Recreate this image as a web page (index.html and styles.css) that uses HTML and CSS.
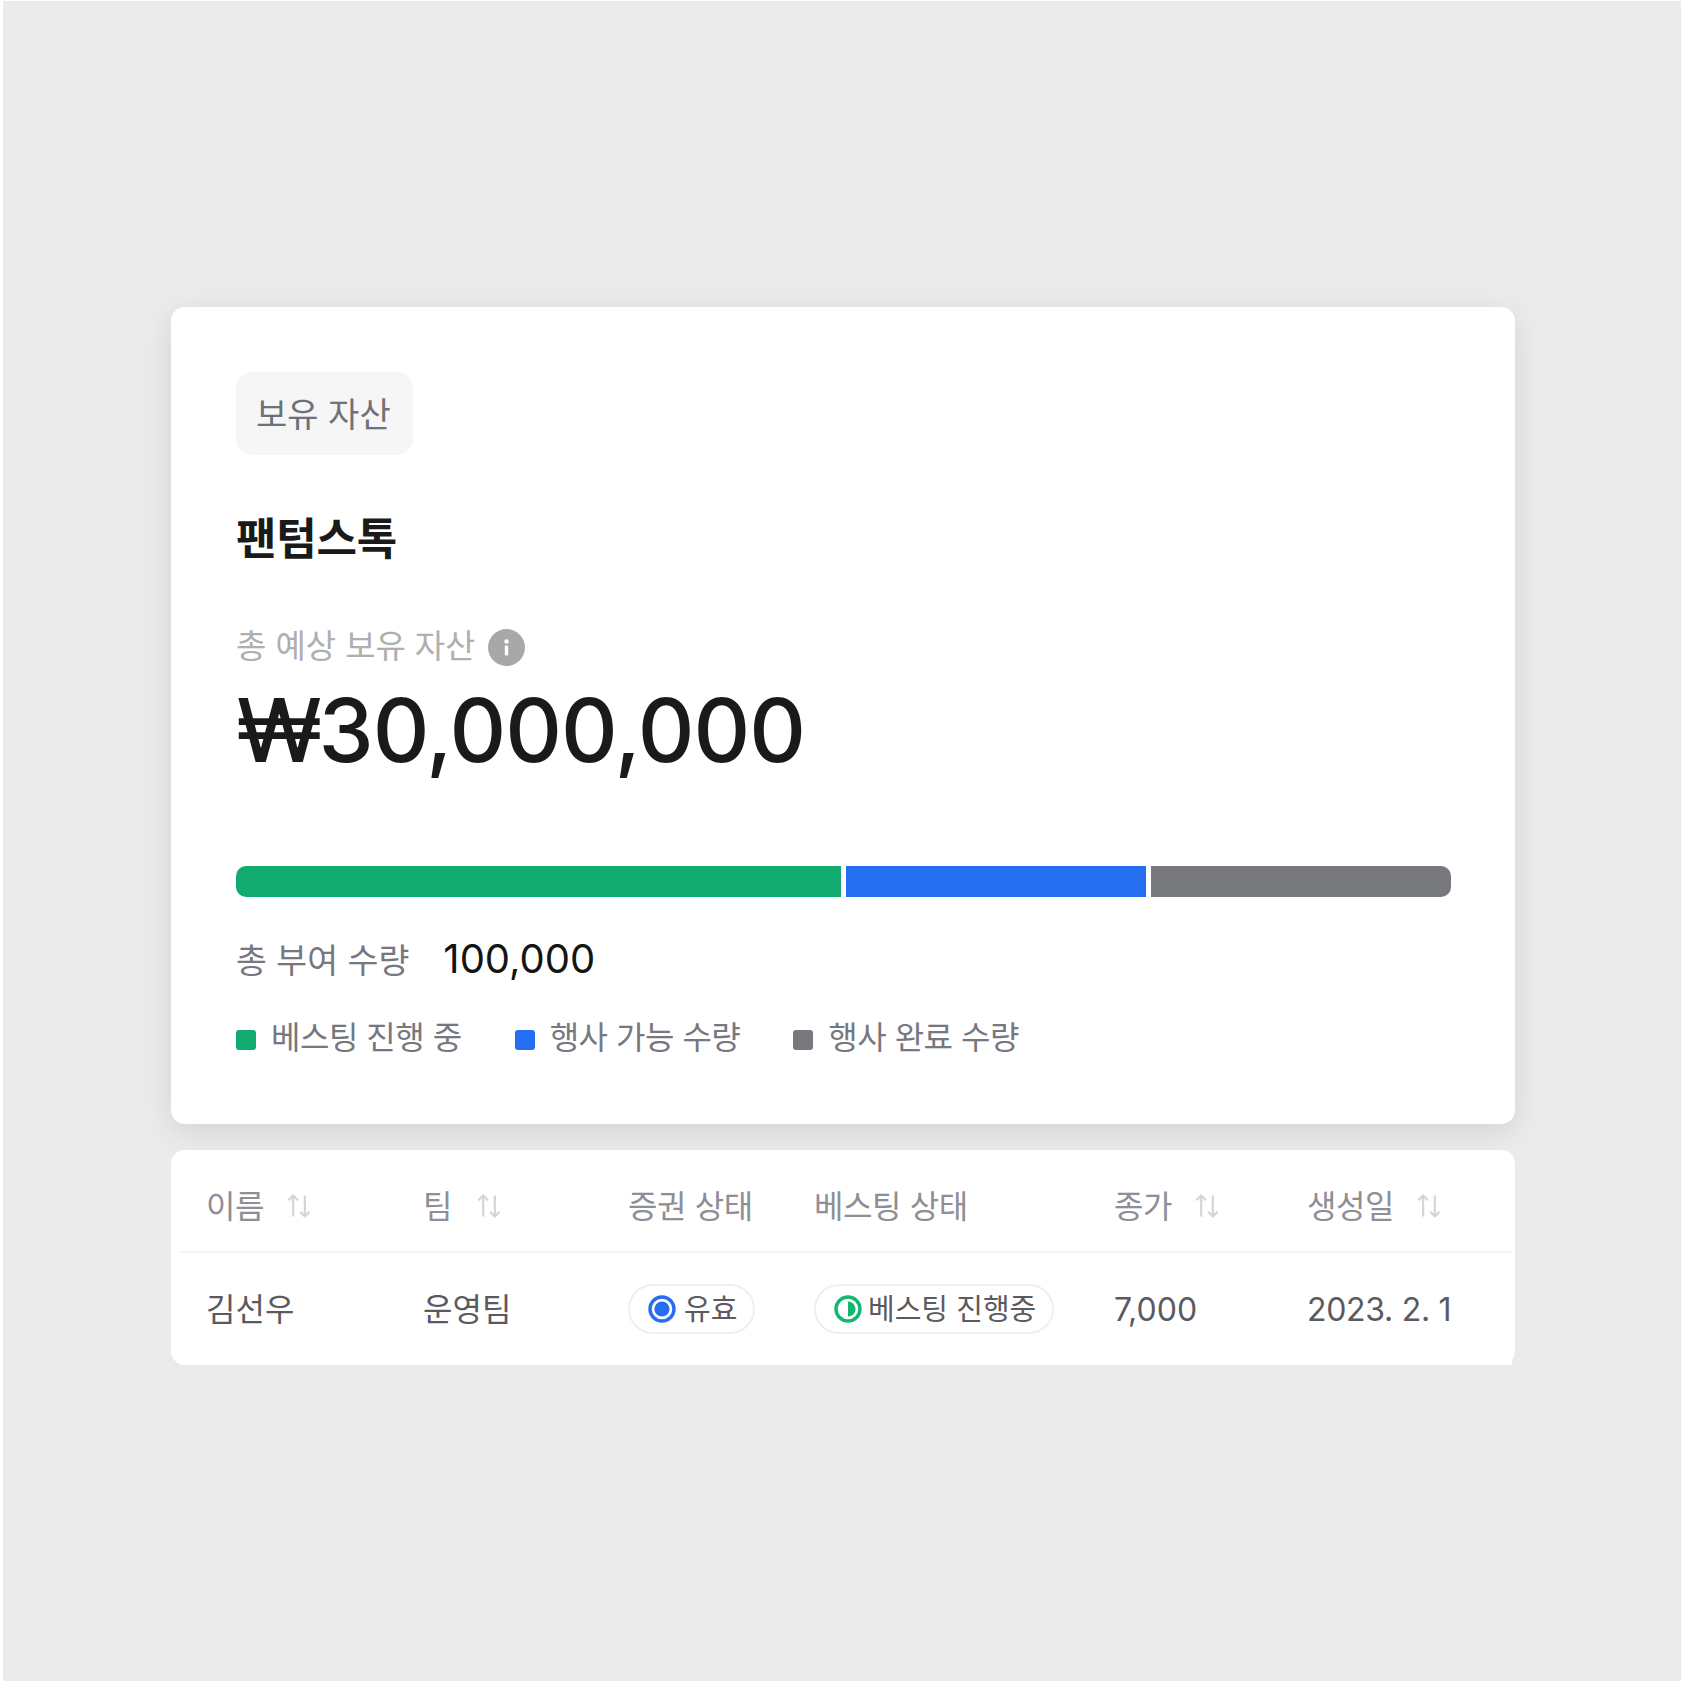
FILE: index.html
```html
<html>
<head>
  <meta charset="utf-8">
  <link rel="stylesheet" href="styles.css">
</head>
<body>
  <div class="page">
    <div class="card">
      <div class="tag">보유 자산</div>
      <h2 class="title">팬텀스톡</h2>
      <div class="total-label">
        <span class="total-text">총 예상 보유 자산</span>
        <svg class="info" viewBox="0 0 37 37">
          <circle cx="18.5" cy="18.5" r="18.5" fill="#a8a8a8"/>
          <circle cx="18.5" cy="12.5" r="2.2" fill="#fff"/>
          <rect x="16.8" y="16.5" width="3.4" height="10" rx="1" fill="#fff"/>
        </svg>
      </div>
      <div class="amount"><span class="won">₩</span>30,000,000</div>
      <div class="bar">
        <div class="seg seg-green"></div>
        <div class="seg seg-blue"></div>
        <div class="seg seg-gray"></div>
      </div>
      <div class="grant">
        <span class="grant-label">총 부여 수량</span>
        <span class="grant-value">100,000</span>
      </div>
      <div class="legend">
        <div class="legend-item"><i class="dot dot-green"></i>베스팅 진행 중</div>
        <div class="legend-item"><i class="dot dot-blue"></i>행사 가능 수량</div>
        <div class="legend-item"><i class="dot dot-gray"></i>행사 완료 수량</div>
      </div>
    </div>

    <div class="table">
      <div class="row head">
        <div class="cell">이름 <svg class="sort" viewBox="0 0 24 24"><path d="M7 21V3M3 7l4-4 4 4M17 3v18M13 17l4 4 4-4"/></svg></div>
        <div class="cell">팀 <svg class="sort sort-team" viewBox="0 0 24 24"><path d="M7 21V3M3 7l4-4 4 4M17 3v18M13 17l4 4 4-4"/></svg></div>
        <div class="cell">증권 상태</div>
        <div class="cell">베스팅 상태</div>
        <div class="cell">종가 <svg class="sort" viewBox="0 0 24 24"><path d="M7 21V3M3 7l4-4 4 4M17 3v18M13 17l4 4 4-4"/></svg></div>
        <div class="cell">생성일 <svg class="sort" viewBox="0 0 24 24"><path d="M7 21V3M3 7l4-4 4 4M17 3v18M13 17l4 4 4-4"/></svg></div>
      </div>
      <div class="row body">
        <div class="cell kr">김선우</div>
        <div class="cell kr">운영팀</div>
        <div class="cell">
          <span class="pill pill-valid">
            <svg class="status" viewBox="0 0 28 28"><circle cx="14" cy="14" r="12" fill="none" stroke="#266ef1" stroke-width="3.4"/><circle cx="14" cy="14" r="7.6" fill="#266ef1"/></svg>
            <span class="pill-text">유효</span>
          </span>
        </div>
        <div class="cell">
          <span class="pill">
            <svg class="status" viewBox="0 0 28 28"><circle cx="14" cy="14" r="12" fill="none" stroke="#12b76f" stroke-width="3.4"/><path d="M14 6.4a7.6 7.6 0 0 1 0 15.2z" fill="#12b76f"/></svg>
            <span class="pill-text">베스팅 진행중</span>
          </span>
        </div>
        <div class="cell">7,000</div>
        <div class="cell date">2023. 2. 1</div>
      </div>
    </div>
  </div>
</body>
</html>
```

FILE: styles.css
```css
html, body {
  margin: 0;
  padding: 0;
  background: #fff;
}

body {
  font-family: Inter, "Noto Sans CJK KR", sans-serif;
  padding: 1px 0 0 3px;
}

.page {
  box-sizing: border-box;
  height: 1680px;
  background: #ebebeb;
  padding: 306px 166px 0 168px;
}

.card {
  box-sizing: border-box;
  height: 817px;
  padding: 65px 64px 0 65px;
  background: #fff;
  border-radius: 14px;
  box-shadow: 0 8px 30px rgba(0,0,0,0.1);
}

.tag {
  display: inline-block;
  padding: 0 22px 0 20px;
  height: 83px;
  line-height: 85px;
  font-size: 34px;
  color: #6f7079;
  background: #f6f6f6;
  border-radius: 16px;
}

.title {
  margin: 53px 0 0 0;
  font-size: 44px;
  line-height: 62px;
  font-weight: 700;
  letter-spacing: -0.2px;
  color: #1a1a1a;
}

.total-label {
  display: flex;
  align-items: center;
  gap: 13px;
  margin-top: 51px;
  height: 48px;
  font-size: 33px;
  color: #afafaf;
}

.total-text {
  padding-bottom: 2px;
  letter-spacing: -0.1px;
}

.info {
  width: 37px;
  height: 37px;
  margin-top: 4px;
}

.amount {
  margin-top: 8px;
  font-size: 88px;
  line-height: 106px;
  font-weight: 500;
  letter-spacing: -1px;
  color: #1a1a1a;
}

.won {
  letter-spacing: -4px;
}

.bar {
  display: flex;
  gap: 5px;
  height: 31px;
  margin-top: 83px;
  border-radius: 10px;
  overflow: hidden;
}

.seg-green {
  width: 605px;
  background: #11ab6f;
}

.seg-blue {
  width: 300px;
  background: #266ef1;
}

.seg-gray {
  flex: 1;
  background: #78797d;
}

.grant {
  display: flex;
  align-items: center;
  gap: 34px;
  height: 50px;
  margin-top: 36px;
}

.grant-label {
  font-size: 33.6px;
  color: #76777f;
}

.grant-value {
  font-size: 40px;
  color: #141414;
}

.legend {
  display: flex;
  gap: 53px;
  margin-top: 31px;
}

.legend-item {
  display: flex;
  align-items: center;
  font-size: 32px;
  line-height: 48px;
  letter-spacing: -0.5px;
  color: #76777f;
}

.dot {
  width: 20px;
  height: 20px;
  margin-top: 3px;
  margin-right: 15px;
  border-radius: 3px;
}

.dot-green { background: #11ab6f; }
.dot-blue { background: #266ef1; }
.dot-gray { background: #78797d; }

.table {
  height: 215px;
  margin-top: 26px;
  padding: 0 3px 0 9px;
  background: #fff;
  border-radius: 14px;
}

.row {
  display: grid;
  grid-template-columns: 217px 205px 186px 300px 193px 1fr;
  padding-left: 26px;
}

.head {
  box-sizing: border-box;
  height: 103px;
  padding-top: 6px;
  border-bottom: 2px solid #f5f5f5;
  align-items: center;
  font-size: 32px;
  letter-spacing: -0.4px;
  color: #8e8e96;
}

.body {
  height: 112px;
  align-items: center;
  font-size: 32px;
  color: #5a5a5f;
  background: #fff;
}

.cell {
  display: flex;
  align-items: center;
  white-space: nowrap;
}

.kr {
  padding-bottom: 4px;
}

.date {
  letter-spacing: -0.3px;
}

.sort {
  width: 28px;
  height: 28px;
  margin-left: 21px;
  margin-top: 4px;
  fill: none;
  stroke: #d3d3d8;
  stroke-width: 1.8;
}

.sort-team {
  margin-left: 23px;
}

.pill {
  box-sizing: border-box;
  display: inline-flex;
  align-items: center;
  gap: 6px;
  height: 50px;
  padding: 0 16px 0 18px;
  font-size: 29px;
  border: 2px solid #efefef;
  border-radius: 26px;
}

.pill-valid {
  gap: 8px;
}

.pill-text {
  margin-bottom: 4px;
}

.status {
  width: 28px;
  height: 28px;
}
```
